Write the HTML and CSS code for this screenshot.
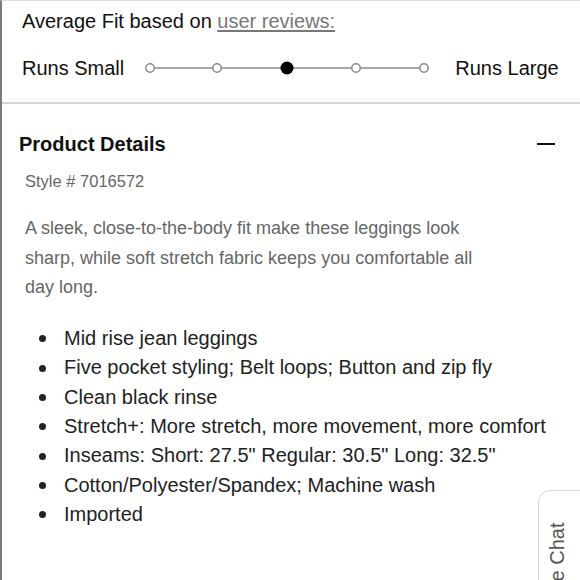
FILE: index.html
```html
<!DOCTYPE html>
<html>
<head>
<meta charset="utf-8">
<link rel="stylesheet" href="styles.css">
</head>
<body>
<div class="page">
  <section class="fit">
    <div class="fit-title">Average Fit based on <a class="link" href="#">user reviews:</a></div>
    <div class="fit-row">
      <span class="fit-label">Runs Small</span>
      <svg class="scale" width="290" height="20" viewBox="0 0 290 20">
        <line x1="4" y1="10" x2="284" y2="10" stroke="#8a8a8a" stroke-width="1.5"/>
        <circle cx="5" cy="10" r="4.2" fill="#fff" stroke="#8a8a8a" stroke-width="1.5"/>
        <circle cx="72" cy="10" r="4.2" fill="#fff" stroke="#8a8a8a" stroke-width="1.5"/>
        <circle cx="142" cy="10" r="6.5" fill="#000"/>
        <circle cx="211" cy="10" r="4.2" fill="#fff" stroke="#8a8a8a" stroke-width="1.5"/>
        <circle cx="279" cy="10" r="4.2" fill="#fff" stroke="#8a8a8a" stroke-width="1.5"/>
      </svg>
      <span class="fit-label">Runs Large</span>
    </div>
  </section>
  <section class="details">
    <div class="details-head">
      <h2 class="details-title">Product Details</h2>
      <span class="minus"></span>
    </div>
    <p class="style">Style # 7016572</p>
    <p class="desc">A sleek, close-to-the-body fit make these leggings look sharp, while soft stretch fabric keeps you comfortable all day long.</p>
    <ul class="bullets">
      <li>Mid rise jean leggings</li>
      <li>Five pocket styling; Belt loops; Button and zip fly</li>
      <li>Clean black rinse</li>
      <li>Stretch+: More stretch, more movement, more comfort</li>
      <li>Inseams: Short: 27.5" Regular: 30.5" Long: 32.5"</li>
      <li>Cotton/Polyester/Spandex; Machine wash</li>
      <li>Imported</li>
    </ul>
  </section>
  <div class="chat"><span class="chat-text">Live Chat</span></div>
</div>
</body>
</html>
```
FILE: styles.css
```css
html, body {
  margin: 0;
  padding: 0;
  background: #fff;
}
body {
  font-family: "Liberation Sans", Arial, sans-serif;
  width: 580px;
  height: 580px;
  overflow: hidden;
}
.page {
  position: relative;
  width: 578px;
  height: 579px;
  border-left: 2px solid #7a7a7a;
  border-top: 1px solid #dedede;
  overflow: hidden;
}
.fit {
  padding: 8px 0 0 20px;
  height: 93px;
  border-bottom: 2px solid #d4d4d4;
  box-sizing: content-box;
}
.fit-title {
  font-size: 20px;
  color: #111;
  line-height: 24px;
}
.link {
  color: #777;
  text-decoration: underline;
  text-underline-offset: 2px;
}
.fit-row {
  display: flex;
  align-items: center;
  margin-top: 23px;
  height: 24px;
}
.fit-label {
  font-size: 20px;
  color: #111;
}
.scale {
  margin: 0 20px 0 21px;
  display: block;
}
.details {
  padding: 0 0 0 17px;
}
.details-head {
  display: flex;
  align-items: center;
  justify-content: space-between;
  margin-top: 27px;
  height: 26px;
}
.details-title {
  margin: 0;
  font-size: 20px;
  font-weight: bold;
  color: #111;
}
.minus {
  width: 18px;
  height: 2px;
  background: #111;
  margin-right: 25px;
}
.style {
  margin: 13px 0 0 6px;
  font-size: 16.5px;
  color: #666;
  line-height: 22px;
}
.desc {
  margin: 22px 0 0 6px;
  font-size: 18px;
  color: #666;
  line-height: 29.5px;
  width: 470px;
}
.bullets {
  list-style: none;
  margin: 21.5px 0 0 0;
  padding: 0 0 0 20px;
  font-size: 20px;
  color: #222;
  line-height: 29.35px;
}
.bullets li {
  display: flex;
  align-items: center;
}
.bullets li::before {
  content: "";
  flex: none;
  width: 7px;
  height: 7px;
  border-radius: 50%;
  background: #222;
  margin-right: 18px;
}
.chat {
  position: absolute;
  left: 536px;
  top: 489px;
  width: 60px;
  height: 100px;
  border: 1px solid #d8d8d8;
  border-radius: 12px;
  background: #fff;
  overflow: hidden;
}
.chat-text {
  position: absolute;
  left: 7px;
  top: 116px;
  transform-origin: 0 0;
  transform: rotate(-90deg);
  font-size: 20px;
  line-height: 23px;
  color: #555;
  white-space: nowrap;
}
```
